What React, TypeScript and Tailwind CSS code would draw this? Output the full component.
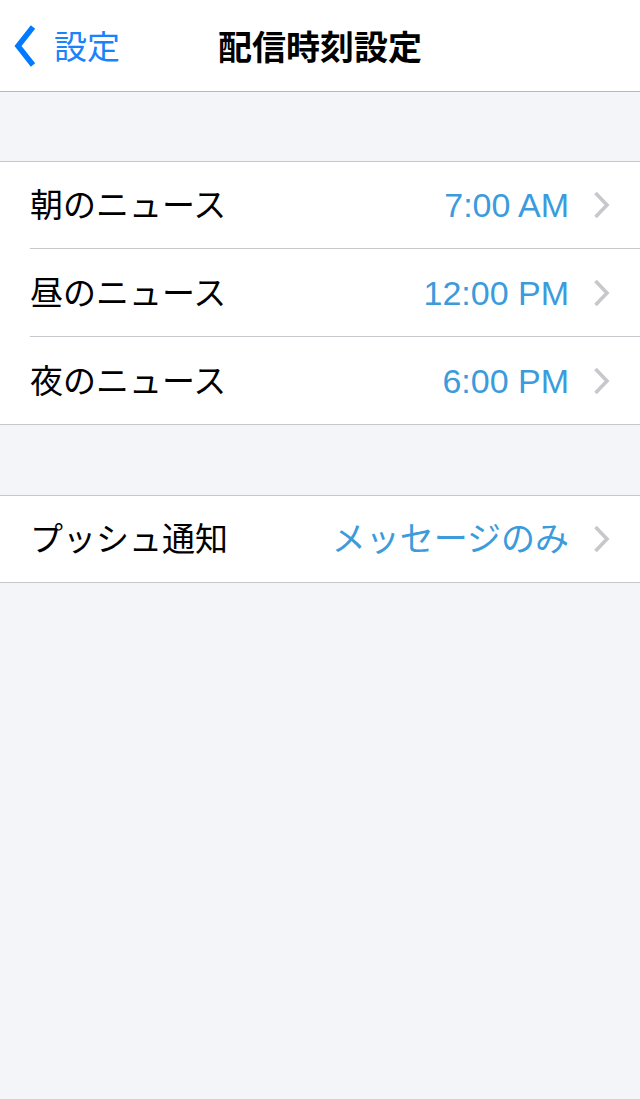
import React from "react";

const font = { fontFamily: '"Noto Sans CJK JP", "Liberation Sans", sans-serif' };
const valueFont = { fontFamily: '"Liberation Sans", "Noto Sans CJK JP", sans-serif' };

function Chevron() {
  return (
    <svg width="17" height="28" viewBox="0 0 17 28" className="shrink-0">
      <path d="M2.5 2 L14 14 L2.5 26" fill="none" stroke="#c7c7cc" strokeWidth="3.6" strokeLinecap="butt" />
    </svg>
  );
}

function Row({ label, value, h, border }: { label: string; value: string; h: string; border?: boolean }) {
  return (
    <div className="pl-[30px]">
      <div className={`flex items-center ${h} pr-[30px] ${border ? "border-b border-[#c8c7cc]" : ""}`}>
        <span className="flex-1 text-[33px] text-black leading-none -mt-[3px]">{label}</span>
        <span className="text-[34px] text-[#3b9bdc] leading-none mr-[24px]" style={valueFont}>{value}</span>
        <Chevron />
      </div>
    </div>
  );
}

export default function App() {
  return (
    <div className="w-[640px] h-[1099px] bg-[#f4f5f9] flex flex-col" style={font}>
      <div className="h-[92px] bg-white border-b border-[#b8b8bc] relative flex items-center justify-center">
        <div className="absolute left-[14px] top-0 h-[91px] flex items-center">
          <svg width="22" height="44" viewBox="0 0 22 44">
            <path d="M19 3 L4 22 L19 41" fill="none" stroke="#007aff" strokeWidth="5.5" />
          </svg>
          <span className="ml-[18px] text-[33px] text-[#1a82fb] leading-none">設定</span>
        </div>
        <span className="text-[34px] font-bold text-black leading-none">配信時刻設定</span>
      </div>
      <div className="h-[69px]" />
      <div className="bg-white border-y border-[#c8c7cc]">
        <Row label="朝のニュース" value="7:00 AM" h="h-[87px]" border />
        <Row label="昼のニュース" value="12:00 PM" h="h-[88px]" border />
        <Row label="夜のニュース" value="6:00 PM" h="h-[87px]" />
      </div>
      <div className="h-[70px]" />
      <div className="bg-white border-y border-[#c8c7cc]">
        <Row label="プッシュ通知" value="メッセージのみ" h="h-[86px]" />
      </div>
    </div>
  );
}
